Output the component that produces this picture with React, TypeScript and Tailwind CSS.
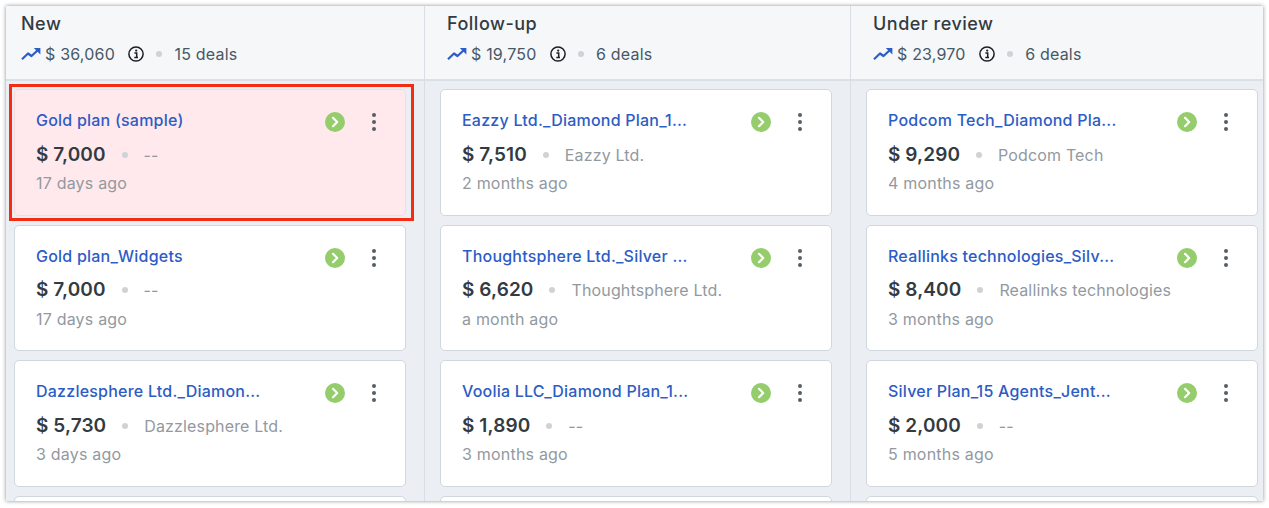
import React from "react";

type Deal = { title: string; amount: string; company: string; age: string; pink?: boolean };
type Col = { name: string; total: string; deals: string; items: Deal[]; cls: string; head: string; body: string };

const columns: Col[] = [
  {
    name: "New", total: "$ 36,060", deals: "15 deals", cls: "w-[419px] border-r border-[#d8dee4]", head: "pl-[15px]", body: "pl-[8px]",
    items: [
      { title: "Gold plan (sample)", amount: "$ 7,000", company: "--", age: "17 days ago", pink: true },
      { title: "Gold plan_Widgets", amount: "$ 7,000", company: "--", age: "17 days ago" },
      { title: "Dazzlesphere Ltd._Diamon...", amount: "$ 5,730", company: "Dazzlesphere Ltd.", age: "3 days ago" },
    ],
  },
  {
    name: "Follow-up", total: "$ 19,750", deals: "6 deals", cls: "w-[426px] border-r border-[#d8dee4]", head: "pl-[22px]", body: "pl-[15px]",
    items: [
      { title: "Eazzy Ltd._Diamond Plan_1...", amount: "$ 7,510", company: "Eazzy Ltd.", age: "2 months ago" },
      { title: "Thoughtsphere Ltd._Silver ...", amount: "$ 6,620", company: "Thoughtsphere Ltd.", age: "a month ago" },
      { title: "Voolia LLC_Diamond Plan_1...", amount: "$ 1,890", company: "--", age: "3 months ago" },
    ],
  },
  {
    name: "Under review", total: "$ 23,970", deals: "6 deals", cls: "flex-1", head: "pl-[22px]", body: "pl-[15px]",
    items: [
      { title: "Podcom Tech_Diamond Pla...", amount: "$ 9,290", company: "Podcom Tech", age: "4 months ago" },
      { title: "Reallinks technologies_Silv...", amount: "$ 8,400", company: "Reallinks technologies", age: "3 months ago" },
      { title: "Silver Plan_15 Agents_Jent...", amount: "$ 2,000", company: "--", age: "5 months ago" },
    ],
  },
];

function Trend() {
  return (
    <svg width="20" height="14" viewBox="0 0 20 14" fill="none" className="shrink-0">
      <path d="M1 12.2 L7 6.5 L10.5 9 L17.5 2.5" stroke="#2c5cc5" strokeWidth="2.2" strokeLinejoin="round" />
      <path d="M12.8 1 H19.4 V7.4 Z" fill="#2c5cc5" />
    </svg>
  );
}

function Info() {
  return (
    <svg width="16" height="16" viewBox="0 0 16 16" fill="none" className="shrink-0">
      <circle cx="8" cy="8" r="7.1" stroke="#1b1f22" strokeWidth="1.5" />
      <circle cx="8.2" cy="4.6" r="1.1" fill="#1b1f22" />
      <path d="M6.4 7.1 H8.7 V11.2 M6.3 11.4 H10" stroke="#1b1f22" strokeWidth="1.5" />
    </svg>
  );
}

function Go() {
  return (
    <svg width="20" height="20" viewBox="0 0 20 20" className="shrink-0">
      <circle cx="10" cy="10" r="10" fill="#95cd6c" />
      <path d="M8 5.8 L12.2 10 L8 14.2" fill="none" stroke="#ffffff" strokeWidth="2.2" strokeLinecap="round" strokeLinejoin="round" />
    </svg>
  );
}

function Kebab() {
  return (
    <div className="flex h-[18px] w-[4px] flex-col items-center justify-between">
      <span className="h-[4px] w-[4px] rounded-full bg-[#555f66]" />
      <span className="h-[4px] w-[4px] rounded-full bg-[#555f66]" />
      <span className="h-[4px] w-[4px] rounded-full bg-[#555f66]" />
    </div>
  );
}

function Card({ d }: { d: Deal }) {
  return (
    <div
      className={`h-[126.5px] w-[392px] shrink-0 rounded-[5px] border pl-[21px] pr-[29.5px] pt-[19px] ${
        d.pink ? "border-[#fbd7de] bg-[#ffe9ed]" : "border-[#cfd7df] bg-white"
      }`}
    >
      <div className="flex items-start justify-between">
        <span className="text-[16px] font-medium leading-[22px] tracking-[0.22px] text-[#2c5cc5]">{d.title}</span>
        <div className="flex items-center gap-[27px] pt-[3px]">
          <Go />
          <Kebab />
        </div>
      </div>
      <div className="mt-[9.5px] flex h-[26px] items-center">
        <span className="text-[19px] font-semibold leading-[26px] tracking-[0.1px] text-[#333b42]">{d.amount}</span>
        <span className="ml-[16px] h-[6px] w-[6px] rounded-full bg-[#cfd3d6]" />
        <span className="ml-[16px] text-[16px] tracking-[0.15px] text-[#92999f]">{d.company}</span>
      </div>
      <div className="mt-[4.5px] text-[16px] leading-[22px] tracking-[0.2px] text-[#92999f]">{d.age}</div>
    </div>
  );
}

export default function App() {
  return (
    <div className="h-[508px] w-[1269px] overflow-hidden bg-white pb-[7px] pl-[6px] pr-[6px] pt-[6px] font-['Inter','Liberation_Sans',sans-serif]">
      <div className="relative flex h-[495px] overflow-hidden bg-[#ebeff3] shadow-[0_0_4px_rgba(0,0,0,0.45)]">
        {columns.map((c) => (
          <div key={c.name} className={`flex flex-col ${c.cls}`}>
            <div className={`h-[75px] shrink-0 border-b-2 border-[#d9e0e6] bg-[#f5f7f9] pt-[6px] ${c.head}`}>
              <div className="text-[18px] font-medium leading-[24px] tracking-[0.5px] text-[#333b42]">{c.name}</div>
              <div className="mt-[8px] flex h-[20px] items-center">
                <Trend />
                <span className="ml-[4px] text-[16px] tracking-[0.2px] text-[#475867]">{c.total}</span>
                <span className="ml-[13px] flex"><Info /></span>
                <span className="ml-[12px] h-[6px] w-[6px] rounded-full bg-[#cfd3d6]" />
                <span className="ml-[12.5px] text-[16px] tracking-[0.2px] text-[#475867]">{c.deals}</span>
              </div>
            </div>
            <div className={`flex flex-col gap-[9px] pt-[8px] ${c.body}`}>
              {c.items.map((d) => (
                <Card key={d.title} d={d} />
              ))}
              <div className="h-[40px] w-[392px] shrink-0 rounded-[5px] border border-[#cfd7df] bg-white" />
            </div>
          </div>
        ))}
        <div className="absolute left-[3px] top-[78px] h-[137px] w-[405px] border-[3px] border-[#f42d12]" />
      </div>
    </div>
  );
}
